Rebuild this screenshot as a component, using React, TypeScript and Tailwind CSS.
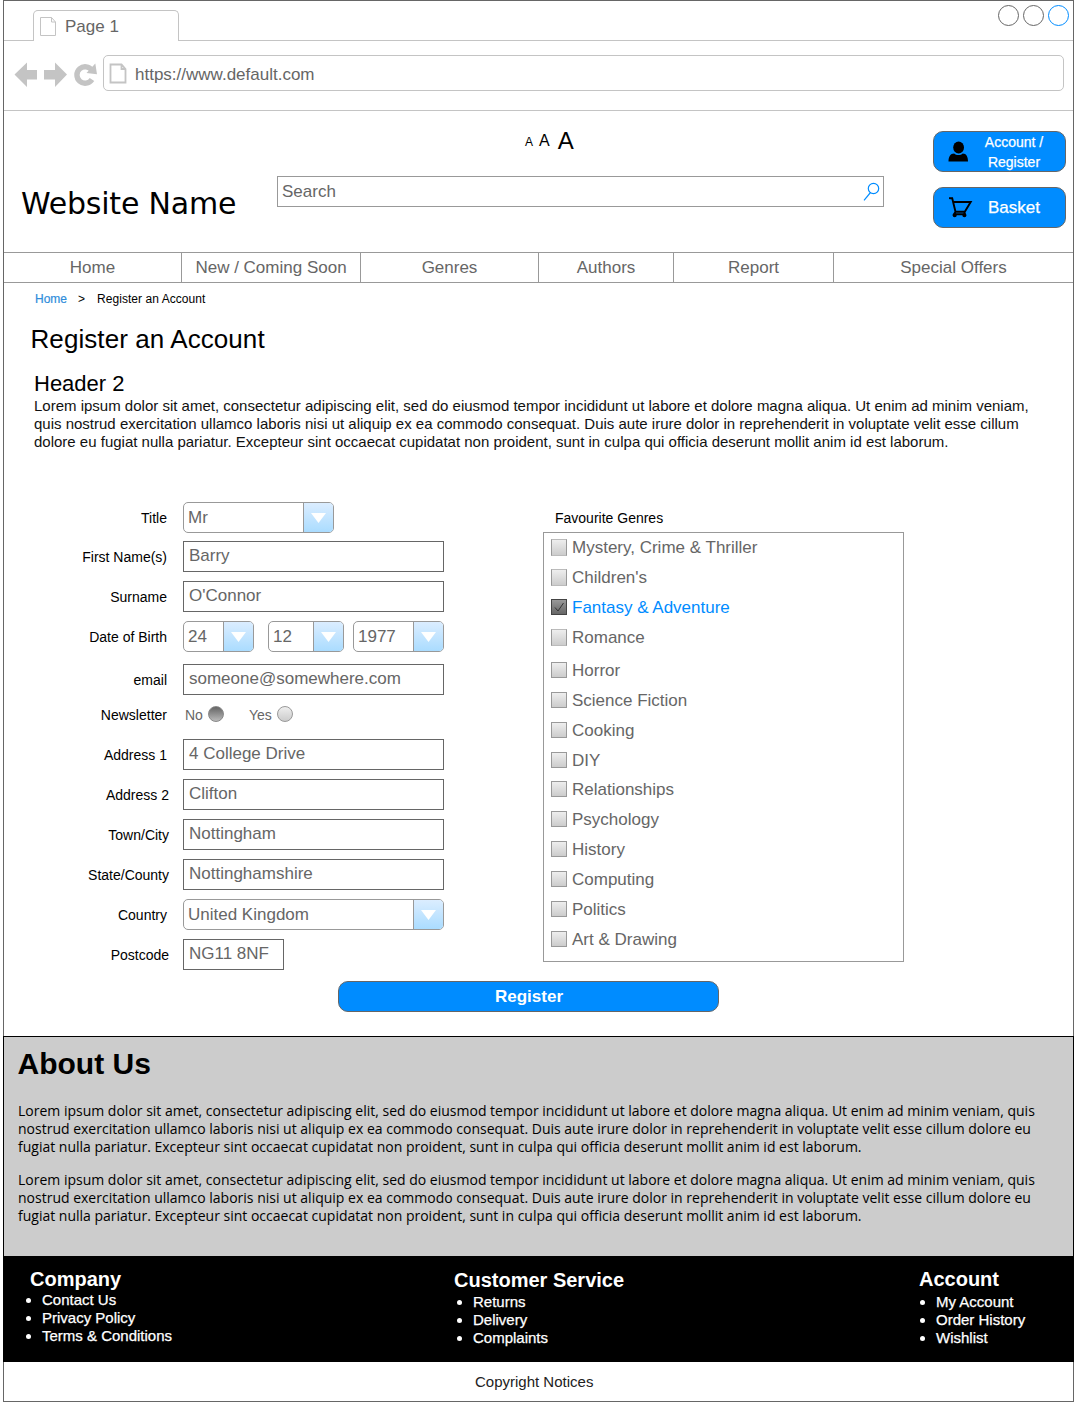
import type { ReactNode } from 'react';

const lineOne =
  'Lorem ipsum dolor sit amet, consectetur adipiscing elit, sed do eiusmod tempor incididunt ut labore et dolore magna aliqua. Ut enim ad minim veniam,';
const lineTwo =
  'quis nostrud exercitation ullamco laboris nisi ut aliquip ex ea commodo consequat. Duis aute irure dolor in reprehenderit in voluptate velit esse cillum';
const lineThree =
  'dolore eu fugiat nulla pariatur. Excepteur sint occaecat cupidatat non proident, sunt in culpa qui officia deserunt mollit anim id est laborum.';

const aboutLines = [
  'Lorem ipsum dolor sit amet, consectetur adipiscing elit, sed do eiusmod tempor incididunt ut labore et dolore magna aliqua. Ut enim ad minim veniam, quis',
  'nostrud exercitation ullamco laboris nisi ut aliquip ex ea commodo consequat. Duis aute irure dolor in reprehenderit in voluptate velit esse cillum dolore eu',
  'fugiat nulla pariatur. Excepteur sint occaecat cupidatat non proident, sunt in culpa qui officia deserunt mollit anim id est laborum.',
];

const navItems = [
  { label: 'Home', cls: 'w-[178px] border-r' },
  { label: 'New / Coming Soon', cls: 'w-[179px] border-r' },
  { label: 'Genres', cls: 'w-[178px] border-r' },
  { label: 'Authors', cls: 'w-[135px] border-r' },
  { label: 'Report', cls: 'w-[160px] border-r' },
  { label: 'Special Offers', cls: 'w-[239px]' },
];

const genres = [
  { label: 'Mystery, Crime & Thriller', cls: 'mt-0', box: 'h-[17px] border-x-[#999] border-y-[#bbb]' },
  { label: "Children's", cls: 'mt-3', box: 'h-[17px] border-x-[#999] border-y-[#bbb]' },
  { label: 'Fantasy & Adventure', cls: 'mt-3', box: '', checked: true },
  { label: 'Romance', cls: 'mt-3', box: 'h-[17px] border-x-[#999] border-y-[#bbb]' },
  { label: 'Horror', cls: 'mt-[15px]', box: 'h-4 border-[#999]' },
  { label: 'Science Fiction', cls: 'mt-3', box: 'h-4 border-[#999]' },
  { label: 'Cooking', cls: 'mt-3', box: 'h-4 border-[#999]' },
  { label: 'DIY', cls: 'mt-3', box: 'h-4 border-[#999]' },
  { label: 'Relationships', cls: 'mt-[11px]', box: 'h-4 border-[#999]' },
  { label: 'Psychology', cls: 'mt-3', box: 'h-4 border-[#999]' },
  { label: 'History', cls: 'mt-3', box: 'h-4 border-[#999]' },
  { label: 'Computing', cls: 'mt-3', box: 'h-4 border-[#999]' },
  { label: 'Politics', cls: 'mt-3', box: 'h-4 border-[#999]' },
  { label: 'Art & Drawing', cls: 'mt-3', box: 'h-4 border-[#999]' },
];

function PageIcon({ className, stroke }: { className: string; stroke: number }) {
  return (
    <svg viewBox="0 0 16 19" className={`overflow-visible ${className}`} fill="none" stroke="#c4c4c4" strokeWidth={stroke}>
      <path d="M.5.5h11l4 4.500v13.500h-15zM11.500.5v4.500h4" />
    </svg>
  );
}

function Row({ label, cls, labelCls = 'w-[163px]', children }: { label: string; cls: string; labelCls?: string; children: ReactNode }) {
  return (
    <div className={`flex h-[31px] items-center ${cls}`}>
      <div className="w-[179px] shrink-0">
        <div className={`text-right text-sm text-black ${labelCls}`}>{label}</div>
      </div>
      {children}
    </div>
  );
}

function Field({ value, cls = 'w-[261px]' }: { value: string; cls?: string }) {
  return <div className={`h-[31px] border border-[#666] pl-[5px] leading-[27px] ${cls}`}>{value}</div>;
}

function Select({ value, cls }: { value: string; cls: string }) {
  return (
    <div className={`flex h-[31px] overflow-hidden rounded-[5px] border border-[#999] ${cls}`}>
      <div className="flex-1 pl-1 leading-[29px]">{value}</div>
      <div className="flex w-[30px] items-center justify-center border-l border-[#999] bg-linear-to-b from-[#dbedff] to-[#aadcff]">
        <svg viewBox="0 0 15 10" className="h-[10px] w-[15px]">
          <path d="M0 0h15l-7.500 10z" fill="#fff" />
        </svg>
      </div>
    </div>
  );
}

function FooterList({ title, items, cls, titleCls, listCls }: { title: string; items: string[]; cls: string; titleCls: string; listCls: string }) {
  return (
    <div className={cls}>
      <h3 className={`text-xl leading-[22px] font-bold ${titleCls}`}>{title}</h3>
      <ul className={`[-webkit-text-stroke:0.25px_white] ${listCls}`}>
        {items.map((item) => (
          <li key={item} className="flex h-[18px] items-center text-[15px] leading-[18px]">
            <span className="mr-[11px] h-[5px] w-[5px] rounded-full bg-white" />
            {item}
          </li>
        ))}
      </ul>
    </div>
  );
}

export default function App() {
  return (
    <div className="h-[1402px] w-[1075px] bg-white pl-[3px] font-['Liberation_Sans',Arial,sans-serif] text-[17px] whitespace-nowrap text-[#666]">
      <div className="flex h-[1402px] w-[1071px] flex-col border border-[#666]">
        {/* Tab strip */}
        <div className="flex h-10 shrink-0">
          <div className="w-[29px] border-b border-[#c4c4c4]" />
          <div className="mt-[9px] flex w-[146px] rounded-t-[5px] border border-b-0 border-[#c4c4c4]">
            <PageIcon className="mt-[6px] ml-[6px] h-[19px] w-4" stroke={1} />
            <span className="ml-[9px] leading-8">Page 1</span>
          </div>
          <div className="flex flex-1 justify-end gap-1 border-b border-[#c4c4c4] pt-1 pr-1">
            <span className="h-[21px] w-[21px] rounded-full border border-[#666]" />
            <span className="h-[21px] w-[21px] rounded-full border border-[#666]" />
            <span className="h-[21px] w-[21px] rounded-full border border-[#008cff]" />
          </div>
        </div>

        {/* Address bar */}
        <div className="flex h-[70px] shrink-0 border-b border-[#c4c4c4] pt-[14px] pl-[10px]">
          <svg viewBox="0 0 86 26" className="mt-[7px] h-[26px] w-[86px] shrink-0" fill="#c4c4c4">
            <path d="M.5 12.500 13 .5V8h10v9.500H13V25zM30 8h11V.5l12 12L41 25v-7.500H30z" />
            <path d="M78 8.500A8.200 8.200 0 1 0 78 17.500" fill="none" stroke="#c4c4c4" strokeWidth="5.400" />
            <path d="M81.300 1.500 83 12.200 72.500 11z" />
          </svg>
          <div className="ml-[3px] flex h-9 w-[961px] rounded-[5px] border border-[#c4c4c4]">
            <PageIcon className="mt-2 ml-[6px] h-[19px] w-4" stroke={1.8} />
            <span className="ml-[9px] leading-[37px]">https://www.default.com</span>
          </div>
        </div>

        {/* Site header */}
        <header className="flex h-[141px] shrink-0 text-black">
          <h1 className="w-[273px] pt-[73px] pl-[17px] font-['DejaVu_Sans',sans-serif] text-[30px] leading-10 tracking-[-0.2px]">Website Name</h1>
          <div className="w-[607px]">
            <div className="flex h-[65px] items-start pt-[14px] pl-[248px]">
              <span className="text-xs leading-[34px]">A</span>
              <span className="ml-[6px] text-base leading-8">A</span>
              <span className="ml-2 text-2xl leading-8">A</span>
            </div>
            <div className="flex h-[31px] items-center justify-between border border-[#999] pr-[3px] pl-1 text-[#666]">
              <span>Search</span>
              <svg viewBox="0 0 17 19" className="h-[19px] w-[17px]" fill="none" stroke="#008cff" strokeWidth="1.200">
                <circle cx="10.500" cy="6.500" r="5.200" />
                <path d="M7.500 10.500 1 18.300" />
              </svg>
            </div>
          </div>
          <div className="mt-5 ml-[49px] flex flex-col gap-[15px] text-white [-webkit-text-stroke:0.25px_white]">
            <div className="flex h-[41px] w-[133px] items-center rounded-[10px] border border-[#666] bg-[#008cff]">
              <svg viewBox="0 0 20 21" className="ml-[14px] h-[21px] w-5" fill="#000">
                <ellipse cx="10.600" cy="6.500" rx="5.400" ry="6" />
                <path d="M.5 20.500c0-4.500 1.800-8 5.700-8 2 2 6.500 2 8.500 0 3.700 0 5.300 3.500 5.300 8z" />
              </svg>
              <span className="ml-2 w-[76px] text-center text-sm leading-5">
                Account /<br />
                Register
              </span>
            </div>
            <div className="flex h-[41px] w-[133px] items-center rounded-[10px] border border-[#666] bg-[#008cff]">
              <svg viewBox="0 0 24 21" className="ml-[15px] h-[21px] w-6" fill="none" stroke="#000" strokeWidth="1.900">
                <path d="M.5 2V1.300h2.700L6.500 14.700h9.300L21.700 5H3.800M6.500 14.700 5 17.300h11l-.7-2.600" />
                <circle cx="5.700" cy="18.300" r="1.100" fill="#000" />
                <circle cx="15.400" cy="18.300" r="1.100" fill="#000" />
              </svg>
              <span className="ml-[15px]">Basket</span>
            </div>
          </div>
        </header>

        {/* Main navigation */}
        <nav className="flex h-[31px] shrink-0 border-y border-[#999]">
          {navItems.map((item) => (
            <a key={item.label} className={`border-[#999] text-center leading-[29px] ${item.cls}`}>
              {item.label}
            </a>
          ))}
        </nav>

        <main className="flex h-[753px] shrink-0 flex-col text-black">
          <div className="mt-[9px] flex pl-[31px] text-xs leading-[14px]">
            <a className="text-[#2f8ddb] [-webkit-text-stroke:0.2px_#2f8ddb]">Home</a>
            <span className="ml-[11px]">&gt;</span>
            <span className="ml-3 tracking-[0.05px]">Register an Account</span>
          </div>
          <h2 className="mt-[18px] pl-[26.500px] text-[26px] leading-[30px] tracking-[0.08px]">Register an Account</h2>
          <h3 className="mt-[17px] pl-[30px] text-[22px] leading-[26px]">Header 2</h3>
          <div className="pl-[30px] text-[15px] leading-[18px] text-[#111]">
            <p>{lineOne}</p>
            <p>{lineTwo}</p>
            <p>{lineThree}</p>
          </div>

          <div className="mt-[51px] flex text-[#666]">
            <form className="w-[539px]">
              <Row label="Title" cls="">
                <Select value="Mr" cls="w-[151px]" />
              </Row>
              <Row label="First Name(s)" cls="mt-2">
                <Field value="Barry" />
              </Row>
              <Row label="Surname" cls="mt-[9px]">
                <Field value="O'Connor" />
              </Row>
              <Row label="Date of Birth" cls="mt-[9px]">
                <Select value="24" cls="w-[71px]" />
                <Select value="12" cls="ml-[14px] w-[76px]" />
                <Select value="1977" cls="ml-[9px] w-[91px]" />
              </Row>
              <Row label="email" cls="mt-3">
                <Field value="someone@somewhere.com" />
              </Row>
              <Row label="Newsletter" cls="mt-1">
                <span className="ml-[2px] text-sm">No</span>
                <span className="mb-[2px] ml-[5px] h-4 w-4 rounded-full border border-[#888] bg-linear-to-b from-[#666] to-[#bbb]" />
                <span className="ml-[25px] text-sm">Yes</span>
                <span className="mb-[2px] ml-[5px] h-4 w-4 rounded-full border border-[#999] bg-linear-to-b from-[#eee] to-[#ccc]" />
              </Row>
              <Row label="Address 1" cls="mt-[9px]">
                <Field value="4 College Drive" />
              </Row>
              <Row label="Address 2" cls="mt-[9px]" labelCls="w-[165px]">
                <Field value="Clifton" />
              </Row>
              <Row label="Town/City" cls="mt-[9px]" labelCls="w-[165px]">
                <Field value="Nottingham" />
              </Row>
              <Row label="State/County" cls="mt-[9px]" labelCls="w-[165px]">
                <Field value="Nottinghamshire" />
              </Row>
              <Row label="Country" cls="mt-[9px]">
                <Select value="United Kingdom" cls="w-[261px]" />
              </Row>
              <Row label="Postcode" cls="mt-[9px]" labelCls="w-[165px]">
                <Field value="NG11 8NF" cls="w-[101px]" />
              </Row>
            </form>

            <section>
              <div className="h-[30px] pl-3 text-sm leading-[33px] text-black">Favourite Genres</div>
              <div className="h-[430px] w-[361px] border border-[#999] pt-[5px] pl-[7px]">
                {genres.map((g) => (
                  <label key={g.label} className={`flex h-[18px] items-center ${g.cls}`}>
                    {g.checked ? (
                      <span className="h-4 w-4 border border-[#444] bg-linear-to-b from-[#999] to-[#666]">
                        <svg viewBox="0 0 14 14" className="h-[14px] w-[14px]" fill="none" stroke="#333" strokeWidth="1">
                          <path d="M3 7.500l3 3.500L11.500 3" />
                        </svg>
                      </span>
                    ) : (
                      <span className={`w-4 border bg-linear-to-b from-[#eee] to-[#ccc] ${g.box}`} />
                    )}
                    <span className={g.checked ? 'ml-[5px] pt-[2px] leading-5 text-[#008cff]' : 'ml-[5px] pt-[2px] leading-5'}>{g.label}</span>
                  </label>
                ))}
              </div>
            </section>
          </div>

          <button className="mt-[11px] ml-[334px] h-[31px] w-[381px] rounded-[10px] border border-[#666] bg-[#008cff] pl-px text-center leading-[29px] font-bold text-white">
            Register
          </button>
        </main>

        <section className="-mx-px h-[220px] shrink-0 border border-b-0 border-black bg-[#ccc] pl-[14px] text-black">
          <h2 className="mt-[9px] -ml-[0.5px] text-[30px] leading-9 font-bold">About Us</h2>
          {[0, 1].map((n) => (
            <div key={n} className={`font-['Open_Sans',sans-serif] text-sm leading-[18px] ${n === 0 ? 'mt-5' : 'mt-[15px]'}`}>
              {aboutLines.map((line) => (
                <p key={line}>{line}</p>
              ))}
            </div>
          ))}
        </section>

        <footer className="-mx-px flex h-[106px] shrink-0 bg-black text-white">
          <FooterList title="Company" items={['Contact Us', 'Privacy Policy', 'Terms & Conditions']} cls="w-[451px] pt-3 pl-[23px]" titleCls="ml-1" listCls="mt-px" />
          <FooterList title="Customer Service" items={['Returns', 'Delivery', 'Complaints']} cls="w-[465px] pt-[13px]" titleCls="" listCls="mt-[2px] ml-[3px]" />
          <FooterList title="Account" items={['My Account', 'Order History', 'Wishlist']} cls="pt-3" titleCls="" listCls="mt-[3px] ml-[1px]" />
        </footer>
        <div className="pl-[471px] text-[15px] leading-[40px] text-[#222]">Copyright Notices</div>
      </div>
    </div>
  );
}
